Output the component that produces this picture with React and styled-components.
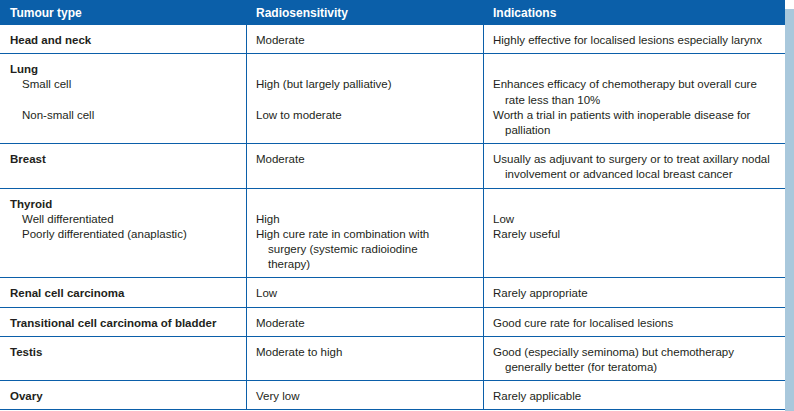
import React from "react";
import styled, { createGlobalStyle } from "styled-components";

const BLUE = "#0b5fa9";

const GlobalStyle = createGlobalStyle`
  body {
    margin: 0;
    background: #fff;
    font-family: "Liberation Sans", Arial, sans-serif;
  }
`;

const rows = [
  {
    cells: [
      [{ text: "Head and neck", bold: true }],
      [{ text: "Moderate" }],
      [{ text: "Highly effective for localised lesions especially larynx" }],
    ],
  },
  {
    cells: [
      [
        { text: "Lung", bold: true },
        { text: "Small cell", indent: 1 },
        { text: "" },
        { text: "Non-small cell", indent: 1 },
      ],
      [
        { text: "" },
        { text: "High (but largely palliative)" },
        { text: "" },
        { text: "Low to moderate" },
      ],
      [
        { text: "" },
        { text: "Enhances efficacy of chemotherapy but overall cure" },
        { text: "rate less than 10%", indent: 1 },
        { text: "Worth a trial in patients with inoperable disease for" },
        { text: "palliation", indent: 1 },
      ],
    ],
  },
  {
    cells: [
      [{ text: "Breast", bold: true }],
      [{ text: "Moderate" }],
      [
        { text: "Usually as adjuvant to surgery or to treat axillary nodal" },
        { text: "involvement or advanced local breast cancer", indent: 1 },
      ],
    ],
  },
  {
    cells: [
      [
        { text: "Thyroid", bold: true },
        { text: "Well differentiated", indent: 1 },
        { text: "Poorly differentiated (anaplastic)", indent: 1 },
      ],
      [
        { text: "" },
        { text: "High" },
        { text: "High cure rate in combination with" },
        { text: "surgery (systemic radioiodine", indent: 1 },
        { text: "therapy)", indent: 1 },
      ],
      [{ text: "" }, { text: "Low" }, { text: "Rarely useful" }],
    ],
  },
  {
    cells: [
      [{ text: "Renal cell carcinoma", bold: true }],
      [{ text: "Low" }],
      [{ text: "Rarely appropriate" }],
    ],
  },
  {
    cells: [
      [{ text: "Transitional cell carcinoma of bladder", bold: true }],
      [{ text: "Moderate" }],
      [{ text: "Good cure rate for localised lesions" }],
    ],
  },
  {
    cells: [
      [{ text: "Testis", bold: true }],
      [{ text: "Moderate to high" }],
      [
        { text: "Good (especially seminoma) but chemotherapy" },
        { text: "generally better (for teratoma)", indent: 1 },
      ],
    ],
  },
  {
    cells: [
      [{ text: "Ovary", bold: true }],
      [{ text: "Very low" }],
      [{ text: "Rarely applicable" }],
    ],
  },
];

export default function App() {
  return (
    <Page>
      <GlobalStyle />
      <Table>
        <Header>
          <HeadCell>Tumour type</HeadCell>
          <HeadCell>Radiosensitivity</HeadCell>
          <HeadCell>Indications</HeadCell>
        </Header>
        {rows.map((row, i) => (
          <Row key={i}>
            {row.cells.map((lines, c) => (
              <Cell key={c} $first={c === 0}>
                {lines.map((line, l) => (
                  <Line key={l} $indent={line.indent} $bold={line.bold}>
                    {line.text}
                  </Line>
                ))}
              </Cell>
            ))}
          </Row>
        ))}
      </Table>
      <SideBar />
    </Page>
  );
}

const Page = styled.div`
  display: flex;
  align-items: stretch;
  width: 794px;
  height: 411px;
  overflow: hidden;
`;

const Table = styled.div`
  width: 785px;
  flex-shrink: 0;
`;

const SideBar = styled.div`
  flex: 1;
  margin-top: 9px;
  background: #a9c8dc;
`;

const Header = styled.div`
  display: grid;
  grid-template-columns: 246px 237px 302px;
  height: 25px;
  box-sizing: border-box;
  padding-top: 1px;
  background: ${BLUE};
`;

const HeadCell = styled.div`
  padding-left: 10px;
  line-height: 24px;
  font-size: 12px;
  font-weight: 700;
  color: #fff;
`;

const Row = styled.div`
  display: grid;
  grid-template-columns: 246px 237px 302px;
  border-bottom: 1px solid ${BLUE};
`;

const Cell = styled.div`
  padding: 8px 0 5px ${(p) => (p.$first ? 10 : 9)}px;
  border-left: ${(p) => (p.$first ? "none" : `1px solid ${BLUE}`)};
`;

const Line = styled.div`
  height: 15.2px;
  line-height: 15.2px;
  padding-left: ${(p) => (p.$indent ? 12 : 0)}px;
  white-space: nowrap;
  font-size: 11.5px;
  font-weight: ${(p) => (p.$bold ? 700 : 400)};
  color: #231f20;
`;
